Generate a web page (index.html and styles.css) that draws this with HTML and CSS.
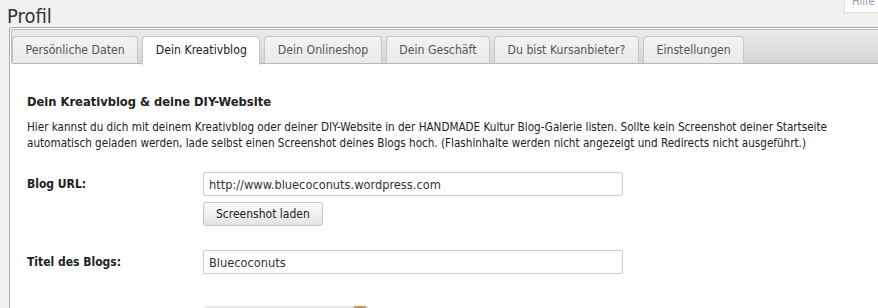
FILE: index.html
```html
<!DOCTYPE html>
<html lang="de">
<head>
  <meta charset="UTF-8">
  <title>Profil</title>
  <link rel="stylesheet" href="styles.css">
</head>
<body>
  <a href="#" class="help-link">Hilfe</a>
  <h1 class="page-title">Profil</h1>

  <div class="tabs">
    <ul class="tabs-nav">
      <li class="tab"><a href="#">Persönliche Daten</a></li>
      <li class="tab active"><a href="#">Dein Kreativblog</a></li>
      <li class="tab"><a href="#">Dein Onlineshop</a></li>
      <li class="tab"><a href="#">Dein Geschäft</a></li>
      <li class="tab"><a href="#">Du bist Kursanbieter?</a></li>
      <li class="tab"><a href="#">Einstellungen</a></li>
    </ul>

    <div class="tab-panel">
      <h2 class="section-title">Dein Kreativblog &amp; deine DIY-Website</h2>
      <p class="intro">Hier kannst du dich mit deinem Kreativblog oder deiner DIY-Website in der HANDMADE Kultur Blog-Galerie listen. Sollte kein Screenshot deiner Startseite automatisch geladen werden, lade selbst einen Screenshot deines Blogs hoch. (Flashinhalte werden nicht angezeigt und Redirects nicht ausgeführt.)</p>

      <form class="blog-form">
        <div class="form-row">
          <label for="blogUrl">Blog URL:</label>
          <div class="field">
            <input type="text" id="blogUrl" value="http://www.bluecoconuts.wordpress.com">
            <button type="button" class="button">Screenshot laden</button>
          </div>
        </div>
        <div class="form-row">
          <label for="blogTitle">Titel des Blogs:</label>
          <div class="field">
            <input type="text" id="blogTitle" value="Bluecoconuts">
          </div>
        </div>
        <div class="form-row">
          <span class="label-empty"></span>
          <div class="field">
            <div class="screenshot-box"><span class="screenshot-mark"></span></div>
          </div>
        </div>
      </form>
    </div>
  </div>
</body>
</html>
```

FILE: styles.css
```css
body {
  margin: 0;
  background-color: #f1f1f1;
  font-family: "DejaVu Sans Condensed", "DejaVu Sans", sans-serif;
  color: #222;
  overflow: hidden;
  height: 308px;
}

.help-link {
  position: absolute;
  top: -7px;
  right: 0;
  width: 26px;
  height: 19px;
  padding-left: 7px;
  background-color: #fff;
  border-left: 1px solid #ddd;
  border-bottom: 1px solid #ddd;
  color: #8a9ab8;
  font-size: 11px;
  line-height: 18px;
  text-decoration: none;
  overflow: hidden;
}

.page-title {
  margin: 0;
  padding: 4px 0 0 7px;
  height: 27px;
  box-sizing: border-box;
  font-size: 20px;
  font-weight: normal;
  color: #333;
}

.tabs {
  margin: 0 0 0 9px;
  border: 1px solid #aaa;
  border-right: none;
  border-radius: 3px 0 0 0;
  background-color: #fff;
  padding: 1px 0 0 1px;
}

.tabs-nav {
  list-style: none;
  margin: 0;
  padding: 6px 0 0 0;
  display: flex;
  gap: 4px;
  height: 27px;
  border: 1px solid #b8b8b8;
  border-right: none;
  border-radius: 3px 0 0 3px;
  background: linear-gradient(#ebebeb, #d5d5d5);
}

.tab {
  border: 1px solid #c6c6c6;
  border-bottom: none;
  border-radius: 4px 4px 0 0;
  background: linear-gradient(#f3f3f3, #e9e9e9);
}

.tab a {
  display: block;
  padding: 0 12.5px;
  line-height: 26px;
  font-size: 12.2px;
  color: #555;
  text-decoration: none;
}

.tab.active {
  background: #fff;
  height: 28px;
}

.tab.active a {
  color: #222;
}

.tab-panel {
  padding: 30px 16px 0 16px;
}

.section-title {
  margin: 0 0 10px 0;
  font-size: 12.8px;
  font-weight: bold;
}

.intro {
  margin: 0 0 21px 0;
  font-size: 11.6px;
  line-height: 16px;
  max-width: 840px;
}

.form-row {
  display: grid;
  grid-template-columns: 176px 420px;
  margin-bottom: 24px;
}

.form-row label {
  font-size: 12px;
  font-weight: bold;
  padding-top: 5px;
}

.field {
  display: flex;
  flex-direction: column;
  align-items: flex-start;
  gap: 6px;
}

.field input {
  width: 100%;
  box-sizing: border-box;
  height: 24px;
  margin: 0;
  padding: 0 5px;
  border: 1px solid #ccc;
  border-radius: 2px;
  font-family: inherit;
  font-size: 12.7px;
  color: #333;
}

.button {
  height: 24px;
  padding: 0 12px;
  border: 1px solid #c4c4c4;
  border-radius: 3px;
  background: linear-gradient(#fbfbfb, #e4e4e4);
  font-family: inherit;
  font-size: 12px;
  color: #222;
}

.screenshot-box {
  margin: 8px 0 0 2px;
  width: 163px;
  height: 20px;
  border-top: 2px solid #e6e6e6;
  position: relative;
}

.screenshot-mark {
  position: absolute;
  top: -2px;
  left: 149px;
  width: 12px;
  height: 2px;
  background-color: #c89a62;
}
```
